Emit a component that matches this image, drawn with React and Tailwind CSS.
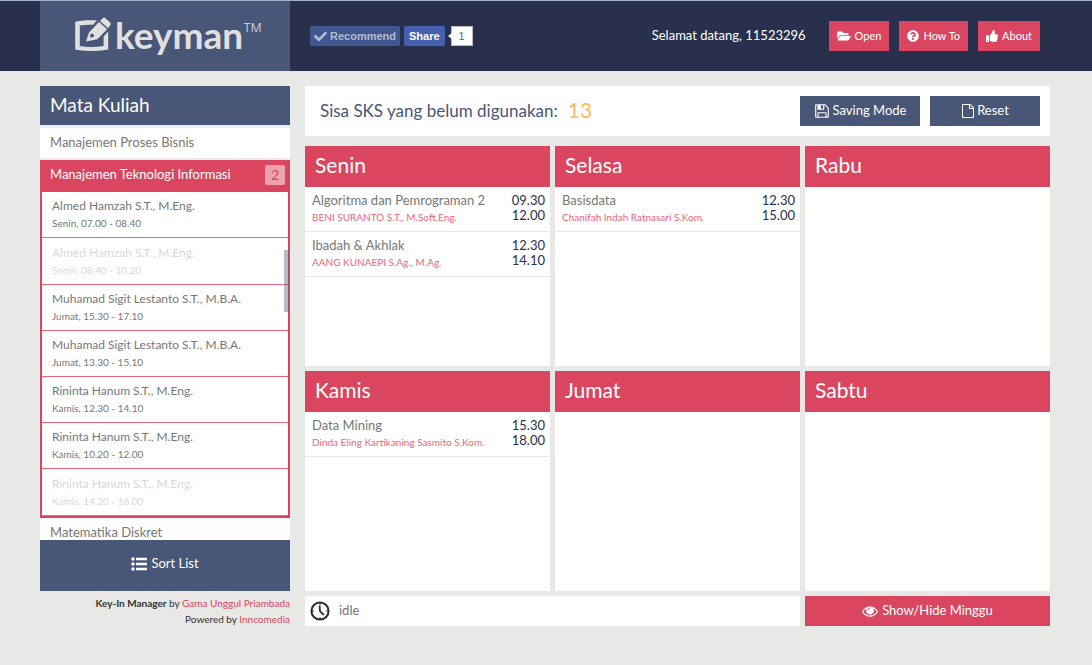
import React from "react";
import { FaFolderOpen, FaQuestionCircle, FaThumbsUp, FaCheck } from "react-icons/fa";

const lecturers = [
  { name: "Almed Hamzah S.T., M.Eng.", time: "Senin, 07.00 - 08.40" },
  { name: "Almed Hamzah S.T., M.Eng.", time: "Senin, 08.40 - 10.20", disabled: true },
  { name: "Muhamad Sigit Lestanto S.T., M.B.A.", time: "Jumat, 15.30 - 17.10" },
  { name: "Muhamad Sigit Lestanto S.T., M.B.A.", time: "Jumat, 13.30 - 15.10" },
  { name: "Rininta Hanum S.T., M.Eng.", time: "Kamis, 12.30 - 14.10" },
  { name: "Rininta Hanum S.T., M.Eng.", time: "Kamis, 10.20 - 12.00" },
  { name: "Rininta Hanum S.T., M.Eng.", time: "Kamis, 14.20 - 16.00", disabled: true },
];

const days = [
  {
    name: "Senin",
    items: [
      { course: "Algoritma dan Pemrograman 2", lecturer: "BENI SURANTO S.T., M.Soft.Eng.", from: "09.30", to: "12.00" },
      { course: "Ibadah & Akhlak", lecturer: "AANG KUNAEPI S.Ag., M.Ag.", from: "12.30", to: "14.10" },
    ],
  },
  {
    name: "Selasa",
    items: [{ course: "Basisdata", lecturer: "Chanifah Indah Ratnasari S.Kom.", from: "12.30", to: "15.00" }],
  },
  { name: "Rabu", items: [] },
  {
    name: "Kamis",
    items: [{ course: "Data Mining", lecturer: "Dinda Eling Kartikaning Sasmito S.Kom.", from: "15.30", to: "18.00" }],
  },
  { name: "Jumat", items: [] },
  { name: "Sabtu", items: [] },
];

function Glyph({ d, className }) {
  return (
    <svg viewBox="0 0 1792 1792" fill="currentColor" className={className} aria-hidden="true">
      <path d={d} />
    </svg>
  );
}

const SAVE =
  "M512 1536h768v-384h-768v384zm896 0h128v-896q0-14-10-38.5t-20-34.5l-281-281q-10-10-34-20t-39-10v416q0 40-28 68t-68 28h-576q-40 0-68-28t-28-68v-416h-128v1280h128v-416q0-40 28-68t68-28h832q40 0 68 28t28 68v416zm-384-928v-320q0-13-9.5-22.5t-22.5-9.5h-192q-13 0-22.5 9.5t-9.5 22.5v320q0 13 9.5 22.5t22.5 9.5h192q13 0 22.5-9.5t9.5-22.5zm640 32v928q0 40-28 68t-68 28h-1344q-40 0-68-28t-28-68v-1344q0-40 28-68t68-28h928q40 0 88 20t76 48l280 280q28 28 48 76t20 88z";
const FILE =
  "M1596 380q28 28 48 76t20 88v1152q0 40-28 68t-68 28h-1344q-40 0-68-28t-28-68v-1600q0-40 28-68t68-28h896q40 0 88 20t76 48zm-444-244v376h376q-10-29-22-41l-313-313q-12-12-41-22zm384 1528v-1024h-416q-40 0-68-28t-28-68v-416h-768v1536h1280z";
const EYE =
  "M1664 960q-152-236-381-353 61 104 61 225 0 185-131.5 316.5t-316.5 131.5-316.5-131.5-131.5-316.5q0-121 61-225-229 117-381 353 133 205 333.5 326.5t434.5 121.5 434.5-121.5 333.5-326.5zm-720-384q0-20-14-34t-34-14q-125 0-214.5 89.5t-89.5 214.5q0 20 14 34t34 14 34-14 14-34q0-86 61-147t147-61q20 0 34-14t14-34zm848 384q0 34-20 69-140 230-376.5 368.5t-499.5 138.5-499.5-139-376.5-368q-20-35-20-69t20-69q140-229 376.5-368t499.5-139 499.5 139 376.5 368q20 35 20 69z";

function Logo() {
  return (
    <a href="#" aria-label="keyman" className="flex h-[70px] w-[250px] shrink-0 items-start bg-[#485677] pl-[35px] text-[#e0e0e0]">
      <svg viewBox="0 0 36 34" className="mt-4 h-[34px] w-9 shrink-0" fill="none" aria-hidden="true">
        <path
          d="M22 3.4L18 7.8C13 7.5 9 7.7 4.8 8.4V29C12 30.2 21 30.2 28.6 29V19.4L33.2 14.6V32.4C22 34.4 11 34.4 0.2 32.4V5.6C0.2 5 0.6 4.6 1.2 4.5C8 3.2 15 3 22 3.4Z"
          fill="currentColor"
        />
        <path
          fillRule="evenodd"
          d="M11 24.4L14 15.4L24 5L32.2 12.2L22.4 22.2ZM14.8 20.6L18.6 20L19.4 18.6L17.4 16.6L15.8 16.8Z"
          fill="currentColor"
        />
        <path d="M25 4L27.8 1.2C28.6 0.4 29.6 0.4 30.4 1.2L35.2 5.6C36 6.4 36 7.4 35.2 8.2L33.2 11.2Z" fill="currentColor" />
      </svg>
      <span className="mt-2 ml-1 font-['Lato'] text-[37px] leading-[52px] font-bold">keyman</span>
      <span className="mt-[19px] font-['Inter'] text-xs leading-4 font-light">TM</span>
    </a>
  );
}

function HeaderButton({ icon, children }) {
  return (
    <button className="flex h-[30px] items-center gap-1 bg-[#da4660] px-2 text-[11px] text-white">
      {icon}
      {children}
    </button>
  );
}

function Day({ day }) {
  return (
    <section className="h-[220px] bg-white">
      <h2 className="h-[41px] bg-[#da4660] px-[10px] text-[21px] leading-[38px] text-white">{day.name}</h2>
      <ul>
        {day.items.map((item) => (
          <li key={item.course} className="flex h-[45px] items-start justify-between border-b border-[#e8e8e6] pt-1 pr-[5px] pl-[7px]">
            <div className="min-w-0 whitespace-nowrap">
              <p className="text-[13px] leading-[18px] text-[#777]">{item.course}</p>
              <p className="text-[10px] leading-4 text-[#ed647e]">{item.lecturer}</p>
            </div>
            <p className="pt-[2px] text-right text-[13px] leading-[15px] text-[#28304d]">
              <time className="block">{item.from}</time>
              <time className="block">{item.to}</time>
            </p>
          </li>
        ))}
      </ul>
    </section>
  );
}

function Sidebar() {
  return (
    <aside className="flex w-[250px] shrink-0 flex-col">
      <h2 className="h-[39px] shrink-0 bg-[#485677] px-[10px] text-[19px] leading-[37px] text-white">Mata Kuliah</h2>
      <div className="relative min-h-0 flex-1 basis-0 overflow-hidden bg-[#eee] pt-[3px]">
        <button className="block h-[30px] w-full bg-white px-[10px] text-left text-[13px] text-[#777]">Manajemen Proses Bisnis</button>
        <div className="mt-[2px] border-2 border-t-0 border-[#da4660] bg-white">
          <button className="flex h-8 w-full items-center justify-between bg-[#da4660] pr-[3px] pb-[2px] pl-2 text-[13px] text-white">
            Manajemen Teknologi Informasi
            <span className="size-5 rounded-xs bg-[#eda2af] text-center text-sm leading-5 text-[#da4660]">2</span>
          </button>
          <ul>
            {lecturers.map((l, i) => (
              <li key={i} className={l.disabled ? "h-[47px] border-b border-[#ed647e] px-[10px] pt-[6px] text-[#d8d8d8]" : "h-[46px] border-b border-[#ed647e] px-[10px] pt-[5px] text-[#777]"}>
                <p className="text-xs leading-[18px]">{l.name}</p>
                <p className="text-[10px] leading-4">{l.time}</p>
              </li>
            ))}
          </ul>
        </div>
        <button className="block h-[30px] w-full bg-white px-[10px] text-left text-[13px] text-[#777]">Matematika Diskret</button>
        <span className="absolute top-[125px] right-[1px] h-[62px] w-[5px] bg-[#485677]/40" />
      </div>
      <button className="flex h-[51px] shrink-0 items-center justify-center gap-1 bg-[#485677] pb-[3px] text-[13px] text-white">
        <svg viewBox="0 0 16 14" className="h-[14px] w-4" fill="currentColor" aria-hidden="true">
          <circle cx="2" cy="2" r="1.8" />
          <circle cx="2" cy="7" r="1.8" />
          <circle cx="2" cy="12" r="1.8" />
          <path d="M5 0.8h11v2.4H5zM5 5.8h11v2.4H5zM5 10.8h11v2.4H5z" />
        </svg>
        Sort List
      </button>
      <footer className="h-[35px] shrink-0 pt-1 text-right text-[10px] leading-4 text-[#333]">
        <p><strong>Key-In Manager</strong> by <a href="#" className="text-[#da4660]">Gama Unggul Priambada</a></p>
        <p>Powered by <a href="#" className="text-[#da4660]">Inncomedia</a></p>
      </footer>
    </aside>
  );
}

export default function App() {
  return (
    <div className="min-h-screen bg-[#e8e8e6] font-['Lato',sans-serif]">
      <header className="flex items-center border-t border-[#9fb4cc] bg-[#28304d] pr-[52px] pl-10">
        <Logo />
        <div className="ml-5 flex items-center gap-1 font-['Liberation_Sans',sans-serif] text-[11px] font-bold">
          <button className="flex h-5 items-center gap-[3px] rounded-xs bg-[#41578f] px-1 text-[#b3bcd2]">
            <FaCheck className="size-[13px]" />
            Recommend
          </button>
          <button className="h-5 rounded-xs bg-[#4560ae] px-[5px] text-white">Share</button>
          <span className="relative ml-[2px] h-5 w-[22px] border border-[#bbb] bg-white text-center leading-[18px] font-normal text-[#666]">
            <span className="absolute top-[6px] -left-1 border-y-[3px] border-r-4 border-y-transparent border-r-white" />
            1
          </span>
        </div>
        <p className="mr-[23px] ml-auto text-[13px] text-white">Selamat datang, 11523296</p>
        <div className="flex gap-[10px]">
          <HeaderButton icon={<FaFolderOpen className="h-3 w-[14px]" />}>Open</HeaderButton>
          <HeaderButton icon={<FaQuestionCircle className="size-3" />}>How To</HeaderButton>
          <HeaderButton icon={<FaThumbsUp className="size-3" />}>About</HeaderButton>
        </div>
      </header>

      <div className="flex gap-[15px] pt-[15px] pr-[42px] pb-[39px] pl-10">
        <Sidebar />
        <main className="min-w-0 flex-1">
          <div className="flex h-[50px] items-center gap-[10px] bg-white px-[10px]">
            <p className="mr-auto flex items-center gap-[10px] pl-[5px] text-[17px] text-[#485677]">
              Sisa SKS yang belum digunakan:
              <span className="pb-[3px] text-[21px] text-[#fdb95f]">13</span>
            </p>
            <button className="flex h-[30px] w-[120px] items-center justify-center gap-[3px] bg-[#485677] text-[13px] text-white">
              <Glyph d={SAVE} className="size-4" />
              Saving Mode
            </button>
            <button className="flex h-[30px] w-[110px] items-center justify-center gap-[2px] bg-[#485677] text-[13px] text-white">
              <Glyph d={FILE} className="size-[14px]" />
              Reset
            </button>
          </div>
          <div className="mt-[10px] grid grid-cols-3 gap-[5px]">
            {days.map((day) => (
              <Day key={day.name} day={day} />
            ))}
            <div className="col-span-2 flex h-[30px] items-center gap-[9px] bg-white px-[5px] text-[13px] text-[#777]">
              <svg viewBox="0 0 20 20" className="size-5" fill="none" stroke="#2b2b2b" aria-hidden="true">
                <circle cx="10" cy="10" r="8.6" strokeWidth="2" />
                <path d="M10 2v2M10 16v2M2 10h2M16 10h2" strokeWidth="1" />
                <path d="M9.6 4.5L10 10.2L13.8 14" strokeWidth="1.8" strokeLinejoin="round" />
              </svg>
              idle
            </div>
            <button className="flex h-[30px] items-center justify-center gap-1 bg-[#da4660] text-[13px] text-white">
              <Glyph d={EYE} className="size-4" />
              Show/Hide Minggu
            </button>
          </div>
        </main>
      </div>
    </div>
  );
}
